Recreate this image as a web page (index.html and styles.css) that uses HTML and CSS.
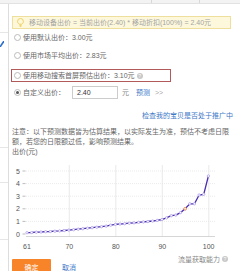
FILE: index.html
```html
<!DOCTYPE html>
<html>
<head>
<meta charset="utf-8">
<title>移动出价</title>
<link rel="stylesheet" href="styles.css">
</head>
<body>
<div class="topbar">
	<span class="th th-1"></span>
	<span class="th th-2"></span>
	<span class="th"></span>
</div>
<div class="main">
	<div class="side">
		<div class="side-row side-row-1"></div>
		<div class="side-row side-row-2">
			<svg class="side-ico" width="4" height="6" viewBox="0 0 4 6"><path d="M0 6 L4 0" stroke="#2f6fc9" stroke-width="1.6"/></svg>
		</div>
		<div class="side-row side-row-3"></div>
		<div class="side-row side-row-4"></div>
	</div>
	<div class="panel">
		<div class="tip">
			<svg class="bulb" width="7" height="9" viewBox="0 0 7 9">
				<path d="M2.2 6.2 C1.2 5.4 0.6 4.5 0.6 3.4 A2.9 2.9 0 0 1 6.4 3.4 C6.4 4.5 5.8 5.4 4.8 6.2 Z" fill="none" stroke="#efcd55" stroke-width="0.9"/>
				<path d="M2.4 7.3 H4.6 M2.7 8.4 H4.3" stroke="#efcd55" stroke-width="0.9"/>
			</svg>
			<span>移动设备出价 = 当前出价(2.40) * 移动折扣(100%) = 2.40元</span>
		</div>

		<div class="opt opt-1"><i class="radio"></i>使用默认出价：3.00元</div>
		<div class="opt opt-2"><i class="radio"></i>使用市场平均出价：2.83元</div>
		<div class="opt opt-3"><i class="radio"></i>使用移动搜索首屏预估出价：3.10元<i class="help">?</i></div>
		<div class="opt opt-4">
			<i class="radio on"></i>自定义出价：
			<input class="price" type="text" value="2.40">
			<span class="unit">元</span>
			<a class="link forecast">预测</a>
			<span class="more">&gt;&gt;</span>
		</div>

		<div class="check"><a class="link">检查我的宝贝是否处于推广中</a></div>
		<p class="note">注意：以下预测数据皆为估算结果，以实际发生为准，预估不考虑日限额，若您的日限额过低，影响预测结果。</p>
		<p class="note">出价(元)</p>

		<svg class="chart" width="222" height="98" viewBox="12 157 222 98">
			<defs>
				<marker id="dot" markerUnits="userSpaceOnUse" markerWidth="4" markerHeight="4" refX="2" refY="2">
					<circle cx="2" cy="2" r="1.2" fill="#fff" stroke="#a796e6" stroke-width="0.7"/>
				</marker>
			</defs>
			<g class="grid-h">
				<line x1="26" y1="171" x2="215" y2="171"/>
				<line x1="26" y1="183.6" x2="215" y2="183.6"/>
				<line x1="26" y1="196.2" x2="215" y2="196.2"/>
				<line x1="26" y1="208.8" x2="215" y2="208.8"/>
				<line x1="26" y1="221.4" x2="215" y2="221.4"/>
			</g>
			<g class="grid-v">
				<line x1="69.3" y1="165" x2="69.3" y2="237"/>
				<line x1="115.8" y1="165" x2="115.8" y2="237"/>
				<line x1="162.3" y1="165" x2="162.3" y2="237"/>
				<line x1="208.8" y1="165" x2="208.8" y2="237"/>
			</g>
			<g class="ticks">
				<line x1="22.5" y1="171" x2="25.5" y2="171"/>
				<line x1="22.5" y1="183.6" x2="25.5" y2="183.6"/>
				<line x1="22.5" y1="196.2" x2="25.5" y2="196.2"/>
				<line x1="22.5" y1="208.8" x2="25.5" y2="208.8"/>
				<line x1="22.5" y1="221.4" x2="25.5" y2="221.4"/>
				<line x1="22.5" y1="234" x2="25.5" y2="234"/>
			</g>
			<line class="axis" x1="26" y1="236.5" x2="215" y2="236.5"/>
			<g class="y-label">
				<text x="20" y="173.5">5</text>
				<text x="20" y="186">4</text>
				<text x="20" y="198.7">3</text>
				<text x="20" y="211.3">2</text>
				<text x="20" y="223.9">1</text>
				<text x="20" y="236.5">0</text>
			</g>
			<g class="x-label">
				<text x="27" y="248.5">61</text>
				<text x="69.3" y="248.5">70</text>
				<text x="115.8" y="248.5">80</text>
				<text x="162.3" y="248.5">90</text>
				<text x="208.6" y="248.5">100</text>
			</g>
			<polyline class="curve" points="27,232.7 31.7,232.5 36.3,232.2 41,232 45.6,231.7 50.3,231.5 54.9,231.2 59.6,230.9 64.2,230.5 68.9,230.1 73.5,229.7 78.2,229.2 82.8,228.7 87.5,228.2 92.1,227.7 96.8,227.2 101.4,226.7 106.1,226.1 110.7,225.2 115.4,224.4 120,224 124.7,223.7 129.3,223.2 134,222.8 138.6,222.4 143.3,221.9 147.9,221.5 152.6,221 157.2,220.4 161.9,219.5 166.5,217.9 171.2,215.7 175.8,215.1 180.5,212.6 185.1,208.8 189.8,203.8 194.4,203.8 199.1,195 203.7,194.3 208.4,176"/>
			<circle cx="185.1" cy="208.8" r="1.3" fill="#fff" stroke="#f0883a" stroke-width="0.8"/>
		</svg>

		<div class="foot">
			<a class="btn-ok">确定</a>
			<a class="link btn-cancel">取消</a>
			<span class="axis-name">流量获取能力<i class="help">?</i></span>
		</div>
	</div>
</div>
</body>
</html>
```

FILE: styles.css
```css
*,*:before,*:after{
	padding: 0;
	margin: 0;
	box-sizing: border-box;
}
body{
	width: 240px;
	height: 271px;
	overflow: hidden;
	background-color: #fff;
	font-family: "Liberation Sans", "Noto Sans CJK SC", sans-serif;
	font-size: 7px;
	line-height: 1;
	color: #666;
}
i{
	font-style: normal;
}
.link{
	color: #3c78c8;
	cursor: pointer;
}

/* page behind the dialog */
.topbar{
	display: flex;
	height: 4px;
	background-color: #f3f3f3;
	border-bottom: 1px solid #e2e2e2;
}
.th{
	height: 100%;
}
.th-1{
	width: 152px;
	border-right: 1px solid #d8d8d8;
}
.th-2{
	width: 48px;
	border-right: 1px solid #d8d8d8;
}
.main{
	display: flex;
	height: 267px;
}
.side{
	width: 8px;
	flex: none;
}
.side-row{
	border-bottom: 1px solid #e6e6e6;
}
.side-row-1{ height: 29px; }
.side-row-2{ height: 115px; padding-top: 8px; }
.side-row-3{ height: 35px; }
.side-row-4{ height: 57px; }
.side-ico{
	display: block;
}

/* dialog */
.panel{
	flex: 1;
	padding: 12px 6px 0 3px;
	border-left: 1px solid #ddd;
}
.tip{
	display: flex;
	align-items: center;
	width: 219px;
	height: 13px;
	padding-left: 4px;
	background-color: #fdf8dc;
	border: 1px solid #eedf9c;
	color: #a3a3a3;
	white-space: nowrap;
}
.bulb{
	flex: none;
	margin-right: 5px;
}
.opt{
	display: flex;
	align-items: center;
	height: 13px;
	padding-left: 2px;
	white-space: nowrap;
}
.opt-1{ margin-top: 2px; }
.opt-2{ margin-top: 5px; }
.opt-3{
	width: 160px;
	margin-top: 7px;
	margin-left: -1px;
	padding-left: 2px;
	border: 1px solid #b25a5a;
}
.opt-4{ margin-top: 4px; }
.radio{
	position: relative;
	width: 7px;
	height: 7px;
	margin-right: 2px;
	border: 1px solid #bbb;
	border-radius: 50%;
	background-color: #fff;
}
.radio.on:after{
	content: "";
	position: absolute;
	left: 1px;
	top: 1px;
	width: 3px;
	height: 3px;
	border-radius: 50%;
	background-color: #555;
}
.help{
	display: inline-block;
	width: 6px;
	height: 6px;
	margin-left: 2px;
	border-radius: 50%;
	background-color: #c8c8c8;
	color: #fff;
	font-size: 5px;
	line-height: 6px;
	text-align: center;
}
.price{
	width: 46px;
	height: 13px;
	margin-left: 7px;
	padding-left: 4px;
	border: 1px solid #ccc;
	font-family: inherit;
	font-size: 7px;
	color: #333;
	outline: none;
}
.unit{
	margin-left: 4px;
	color: #888;
}
.forecast{
	margin-left: 7px;
}
.more{
	margin-left: 5px;
	color: #aaa;
}
.check{
	margin-top: 13px;
	height: 8px;
	line-height: 8px;
	text-align: right;
	padding-right: 1px;
}
.note{
	line-height: 10px;
	color: #666;
}
.check + .note{
	margin-top: 7px;
}

/* chart */
.chart{
	display: block;
}
.grid-h line{
	stroke: #e6e6e6;
	stroke-width: 0.8;
	stroke-dasharray: 1 1;
}
.grid-v line{
	stroke: #e4e4e4;
	stroke-width: 0.8;
}
.ticks line{
	stroke: #aaa;
	stroke-width: 0.8;
}
.axis{
	stroke: #ccc;
	stroke-width: 0.8;
}
.y-label text{
	font-size: 7px;
	fill: #555;
	text-anchor: end;
}
.x-label text{
	font-size: 7px;
	fill: #555;
	text-anchor: middle;
}
.curve{
	fill: none;
	stroke: #4a2fae;
	stroke-width: 1.3;
	marker-start: url(#dot);
	marker-mid: url(#dot);
	marker-end: url(#dot);
}

/* footer */
.foot{
	display: flex;
	align-items: flex-start;
}
.btn-ok{
	width: 39px;
	height: 18px;
	margin-top: 4px;
	line-height: 18px;
	text-align: center;
	color: #fff;
	background-color: #f8842a;
	border-radius: 1px;
}
.btn-cancel{
	margin-top: 4px;
	margin-left: 11px;
	line-height: 18px;
}
.axis-name{
	display: flex;
	align-items: center;
	height: 8px;
	margin-left: auto;
	margin-right: 6px;
	color: #888;
}
```
